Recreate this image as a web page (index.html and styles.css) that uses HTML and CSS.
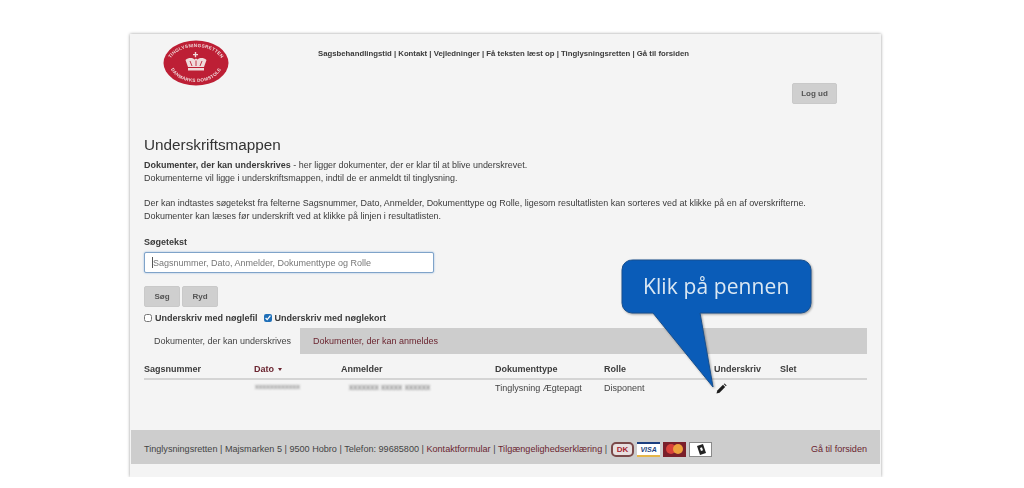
FILE: index.html
```html
<!DOCTYPE html>
<html lang="da">
<head>
    <meta charset="UTF-8">
    <meta name="viewport" content="width=device-width, initial-scale=1.0">
    <title>Underskriftsmappen</title>
    <link rel="stylesheet" href="styles.css">
</head>
<body>
    <div class="page">
        <div class="top">
            <svg class="logo" width="66" height="46" viewBox="0 0 66 46">
                <defs>
                    <path id="arc-top" d="M5 25 C9 1 57 1 61 25"/>
                    <path id="arc-bottom" d="M7 27 C14 47 52 47 59 27"/>
                </defs>
                <ellipse cx="33" cy="23" rx="32.5" ry="22.5" fill="#bd1f35"/>
                <text class="logo-text"><textPath href="#arc-top" startOffset="50%" text-anchor="middle">TINGLYSNINGSRETTEN</textPath></text>
                <text class="logo-text"><textPath href="#arc-bottom" startOffset="50%" text-anchor="middle">DANMARKS DOMSTOLE</textPath></text>
                <path d="M31.800 12h1.400v2h1.800v1.200h-1.800v2h-1.400v-2H30V14h1.800z" fill="#f0dcdc"/>
                <path d="M22.500 20c3-2.500 6.500-2.500 9 -0.500l1.500-1 1.500 1c2.500-2 6-2 9 0.500l-2.500 7H25z" fill="#f0dcdc"/>
                <path d="M27 21l2 5M33 20.500v5.500M39 21l-2 5" stroke="#bd1f35" stroke-width="0.900"/>
                <rect x="25" y="28" width="16" height="2.500" fill="#f0dcdc"/>
            </svg>
            <div class="top-nav">Sagsbehandlingstid | Kontakt | Vejledninger | Få teksten læst op | Tinglysningsretten | Gå til forsiden</div>
            <button class="btn logout">Log ud</button>
        </div>

        <div class="content">
            <h1>Underskriftsmappen</h1>
            <p><b>Dokumenter, der kan underskrives</b> - her ligger dokumenter, der er klar til at blive underskrevet.<br>
            Dokumenterne vil ligge i underskriftsmappen, indtil de er anmeldt til tinglysning.</p>
            <p>Der kan indtastes søgetekst fra felterne Sagsnummer, Dato, Anmelder, Dokumenttype og Rolle, ligesom resultatlisten kan sorteres ved at klikke på en af overskrifterne.<br>
            Dokumenter kan læses før underskrift ved at klikke på linjen i resultatlisten.</p>

            <label class="search-label" for="search">Søgetekst</label>
            <div class="search-wrap">
                <input class="search-input" id="search" type="text" placeholder="Sagsnummer, Dato, Anmelder, Dokumenttype og Rolle">
            </div>

            <div class="search-btns">
                <button class="btn">Søg</button>
                <button class="btn">Ryd</button>
            </div>

            <div class="sign-options">
                <label><input type="checkbox"> Underskriv med nøglefil</label>
                <label><input type="checkbox" checked> Underskriv med nøglekort</label>
            </div>

            <div class="tabs">
                <div class="tab active">Dokumenter, der kan underskrives</div>
                <div class="tab">Dokumenter, der kan anmeldes</div>
            </div>

            <table class="doc-table">
                <colgroup>
                    <col class="col-sag"><col class="col-dato"><col class="col-anm"><col class="col-type"><col class="col-rolle"><col class="col-sign"><col class="col-slet">
                </colgroup>
                <thead>
                    <tr>
                        <th>Sagsnummer</th>
                        <th class="sorted">Dato <span class="caret"></span></th>
                        <th>Anmelder</th>
                        <th>Dokumenttype</th>
                        <th>Rolle</th>
                        <th>Underskriv</th>
                        <th>Slet</th>
                    </tr>
                </thead>
                <tbody>
                    <tr>
                        <td></td>
                        <td><span class="redacted">xxxxxxxxxxxx</span></td>
                        <td><span class="redacted anm">xxxxxxx xxxxx xxxxxx</span></td>
                        <td>Tinglysning Ægtepagt</td>
                        <td>Disponent</td>
                        <td>
                            <svg class="pen" width="11" height="11" viewBox="0 0 11 11">
                                <path d="M0.500 10.500l0.800-3 5.700-5.700 2.200 2.200-5.700 5.700z" fill="#1c1c1c"/>
                                <path d="M7.700 1.100l0.900-0.700 2 2-0.700 0.900z" fill="#1c1c1c"/>
                            </svg>
                        </td>
                        <td></td>
                    </tr>
                </tbody>
            </table>
        </div>

        <div class="footer">
            <span>Tinglysningsretten | Majsmarken 5 | 9500 Hobro | Telefon: 99685800 | <a>Kontaktformular</a> | <a>Tilgængelighedserklæring</a> |</span>
            <div class="cards">
                <span class="card card-dk">DK</span>
                <span class="card card-visa">VISA</span>
                <span class="card card-mc"><i></i><i></i></span>
                <span class="card card-id">
                    <svg width="12" height="13" viewBox="0 0 12 13"><path d="M2 3l6-2 3 9-6 2z" fill="#222"/><path d="M5 5l2-.7 1 3-2 .7z" fill="#fff"/></svg>
                </span>
            </div>
            <a class="footer-home">Gå til forsiden</a>
        </div>

        <div class="callout">
            <svg class="callout-shape" width="200" height="135" viewBox="0 0 200 135">
                <path d="M12 1H180a10 10 0 0 1 10 10V44a10 10 0 0 1-10 10H79L92 128 32 54H11A10 10 0 0 1 1 44V11A10 10 0 0 1 12 1z" fill="#0a5cb8" stroke="#164f8f" stroke-width="1"/>
            </svg>
            <span class="callout-text">Klik på pennen</span>
        </div>
    </div>
</body>
</html>
```

FILE: styles.css
```css
* {
    margin: 0;
    padding: 0;
    box-sizing: border-box;
}

body {
    font-family: "Liberation Sans", Arial, sans-serif;
    background: white;
    color: #3a3a3a;
    font-size: 9px;
    overflow: hidden;
}

.page {
    position: relative;
    width: 751px;
    height: 443px;
    margin: 34px 0 0 130px;
    background: #f4f4f4;
    box-shadow: 0 0 3px rgba(0,0,0,0.4);
    filter: blur(0.45px);
}

.top {
    display: flex;
    height: 76px;
}

.logo {
    margin: 6px 0 0 33px;
    flex-shrink: 0;
}

.logo-text {
    font-size: 4.600px;
    font-weight: bold;
    fill: #f0dcdc;
    letter-spacing: 0.3px;
}

.top-nav {
    flex: 1;
    margin: 15px 0 0 89px;
    font-size: 7.780px;
    font-weight: bold;
    line-height: 10px;
}

.btn {
    height: 21px;
    padding: 0 11px;
    background: #cfcfcf;
    border: 1px solid #c9c9c9;
    border-radius: 2px;
    color: #555;
    font-family: inherit;
    font-size: 8px;
    font-weight: bold;
}

.logout {
    width: 45px;
    padding: 0;
    margin: 49px 44px 0 0;
}

.content {
    padding: 0 14px;
}

h1 {
    margin-top: 25px;
    font-size: 15.300px;
    font-weight: normal;
    line-height: 19px;
    color: #333;
}

p {
    margin-top: 5px;
    line-height: 13px;
    font-size: 8.960px;
}

p + p {
    margin-top: 12px;
}

.search-label {
    display: block;
    margin-top: 14px;
    font-size: 9px;
    font-weight: bold;
    line-height: 11px;
}

.search-wrap {
    position: relative;
    width: 290px;
    margin-top: 4px;
}

/* text caret in the focused field */
.search-wrap::after {
    content: "";
    position: absolute;
    left: 8px;
    top: 5px;
    width: 1px;
    height: 11px;
    background: #555;
}

.search-input {
    display: block;
    width: 290px;
    height: 21px;
    padding: 0 8px;
    border: 1px solid #7fa3c9;
    border-radius: 2px;
    box-shadow: 0 0 2px #8db4dc;
    outline: none;
    background: white;
    font-family: inherit;
    font-size: 9px;
}

.search-input::placeholder {
    color: #777;
    opacity: 1;
}

.search-btns {
    display: flex;
    gap: 2px;
    margin-top: 13px;
}

.search-btns .btn {
    width: 36px;
    padding: 0;
}

.sign-options {
    display: flex;
    gap: 6px;
    margin-top: 5px;
    height: 12px;
    font-size: 9px;
    font-weight: bold;
}

.sign-options label {
    display: flex;
    align-items: center;
    gap: 3px;
}

.sign-options input {
    width: 8px;
    height: 8px;
    accent-color: #1f6fb8;
}

.tabs {
    display: flex;
    height: 26px;
    margin-top: 4px;
    background: #cdcdcd;
}

.tab {
    padding: 0 13px;
    line-height: 26px;
    color: #6b2530;
    white-space: nowrap;
}

.tab.active {
    width: 156px;
    padding-left: 10px;
    background: #f4f4f4;
    color: #444;
}

.doc-table {
    width: 723px;
    table-layout: fixed;
    border-collapse: collapse;
}

.col-sag { width: 110px; }
.col-dato { width: 87px; }
.col-anm { width: 154px; }
.col-type { width: 109px; }
.col-rolle { width: 110px; }
.col-sign { width: 66px; }
.col-slet { width: 87px; }

.doc-table th {
    height: 25px;
    padding-top: 5px;
    text-align: left;
    font-size: 9px;
    border-bottom: 2px solid #d4d4d4;
    color: #3c3c3c;
}

.doc-table th.sorted {
    color: #6b2530;
}

.caret {
    display: inline-block;
    margin: 0 0 1px 1px;
    border-left: 2.500px solid transparent;
    border-right: 2.500px solid transparent;
    border-top: 3px solid #6b2530;
}

.doc-table td {
    height: 17px;
    font-size: 9px;
    color: #444;
}

.redacted {
    display: inline-block;
    margin-left: 1px;
    color: #666;
    font-size: 7.500px;
    vertical-align: 3px;
    filter: blur(0.8px);
}

.redacted.anm {
    margin-left: 8px;
    font-size: 8.500px;
}

.pen {
    display: block;
    margin-left: 2px;
}

.footer {
    position: absolute;
    left: 1px;
    right: 1px;
    top: 396px;
    height: 34px;
    display: flex;
    align-items: center;
    padding: 4px 13px 0;
    background: #cdcdcd;
    font-size: 9.100px;
    color: #444;
}

.footer a {
    color: #6b2530;
}

.cards {
    display: flex;
    gap: 3px;
    margin-left: 4px;
}

.card {
    display: flex;
    align-items: center;
    justify-content: center;
    width: 23px;
    height: 15px;
    background: white;
    overflow: hidden;
}

.card-dk {
    border: 2px solid #7a4a4a;
    border-radius: 5px;
    background: #e8e0e0;
    color: #a5242f;
    font-size: 8px;
    font-weight: bold;
}

.card-visa {
    border-top: 2px solid #1c3f80;
    border-bottom: 2px solid #e5b64a;
    color: #1c3f80;
    font-size: 7px;
    font-weight: bold;
    font-style: italic;
}

.card-mc {
    background: #7a1f2a;
}

.card-mc i {
    width: 10px;
    height: 10px;
    border-radius: 50%;
    background: #d8413a;
}

.card-mc i + i {
    margin-left: -3px;
    background: #eda13c;
}

.card-id {
    border: 1px solid #8a8a8a;
}

.footer-home {
    margin-left: auto;
}

.callout {
    position: absolute;
    left: 491px;
    top: 225px;
    width: 200px;
    height: 135px;
}

.callout-shape {
    display: block;
    filter: drop-shadow(1px 1px 1px rgba(0,0,0,0.35));
}

.callout-text {
    position: absolute;
    left: 22px;
    top: 13px;
    font-family: "Open Sans", sans-serif;
    font-size: 21px;
    line-height: 28px;
    letter-spacing: 0.1px;
    color: #dbe8f3;
    white-space: nowrap;
}
```
